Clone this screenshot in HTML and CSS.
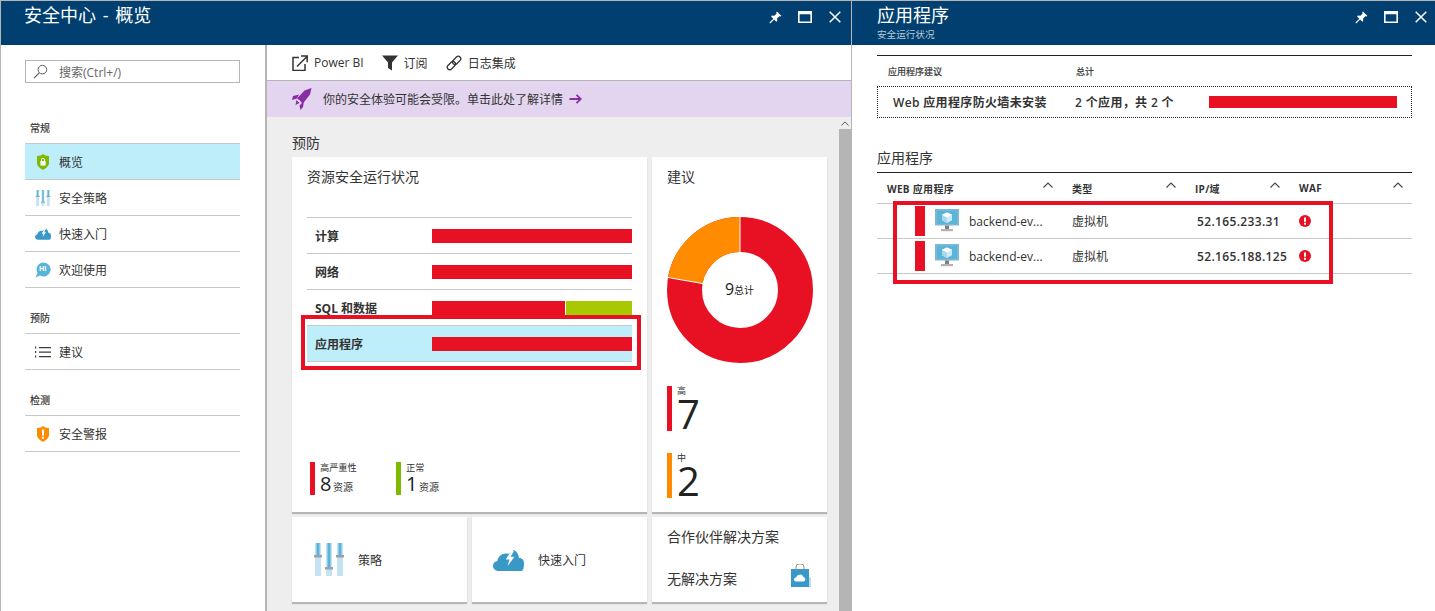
FILE: index.html
```html
<!DOCTYPE html>
<html lang="zh-CN">
    <head>
        <title>安全中心 - 概览</title>
        <meta charset="utf-8" />
        <link rel="stylesheet" href="styles.css">
    </head>
    <body>
        <svg class="defs" width="0" height="0">
            <symbol id="ic-pin" viewBox="0 0 14 14"><path d="M8.6 0.6l4.8 4.8-1.3 0.6-1-0.4-2.4 2.4 0.2 2.6-1 1-2.4-2.5-3.9 4-0.9 0 0-0.9 4-3.9-2.5-2.4 1-1 2.6 0.2 2.4-2.4-0.4-1z" fill="#fff"/></symbol>
            <symbol id="ic-max" viewBox="0 0 14 12"><path d="M0 0h14v12H0z M1.6 3.2v7.2h10.8V3.2z" fill="#fff" fill-rule="evenodd"/></symbol>
            <symbol id="ic-close" viewBox="0 0 12 12"><path d="M0.7 0.7l10.6 10.6M11.3 0.7L0.7 11.3" stroke="#fff" stroke-width="1.5" fill="none"/></symbol>
            <symbol id="ic-search" viewBox="0 0 16 16"><circle cx="10" cy="6" r="4.6" fill="none" stroke="#555" stroke-width="1"/><path d="M6.6 9.4L1 15" stroke="#555" stroke-width="1.2"/></symbol>
            <symbol id="ic-shield" viewBox="0 0 14 16"><path d="M7 0l2.2 1.6L13 2v7c0 3.200-3.400 5.400-6 7-2.600-1.600-6-3.800-6-7V2l3.800-0.400z" fill="#7fba00"/><path d="M4.400 7h5.200v4.600H4.400z" fill="#fff"/><path d="M5.500 7V5.800a1.500 1.500 0 013 0V7" fill="none" stroke="#fff" stroke-width="1"/></symbol>
            <symbol id="ic-shield-warn" viewBox="0 0 14 16"><path d="M7 0l2.200 1.600L13 2v7c0 3.200-3.400 5.400-6 7-2.600-1.600-6-3.800-6-7V2l3.800-0.400z" fill="#ff8c00"/><path d="M6 3.500h2v6H6zM6 10.700h2v2H6z" fill="#fff"/></symbol>
            <symbol id="ic-sliders" viewBox="0 0 30 33"><path d="M1 0h6v33H1zM12 0h6v33H12zM23 0h6v33H23z" fill="#c4e3f2"/><path d="M2.500 0h3v12h-3zM13.500 0h3v24h-3zM24.500 0h3v12h-3z" fill="#59b4d9"/><path d="M0 12h8v2.500H0zM11 24h8v2.500h-8zM22 12h8v2.500h-8z" fill="#a0a0a0"/></symbol>
            <symbol id="ic-cloud" viewBox="0 0 34 24"><path d="M6.500 24C2.800 24 0 21.500 0 18.500s2.200-5 4.800-5.400C5.500 8.500 9.500 5 14 5c1.800 0 3 0.300 4-0.500L23 1c3 1.500 5 4.500 5.500 8.500 3.200 0.500 5.500 2.200 5.500 6 0 1.500 0 8.500-3 8.500z" fill="#3999c6"/><path d="M20 2l-6 9.500h4l-2 7 7.500-10h-4.200L23 2z" fill="#fff"/></symbol>
            <symbol id="ic-hi" viewBox="0 0 16 16"><path d="M8.500 0.500a7 7 0 11-3.500 13L0.500 15.500l2-4.500A7 7 0 018.500 0.500z" fill="#59b4d9"/></symbol>
            <symbol id="ic-list" viewBox="0 0 16 12"><path d="M4 1h12v1.200H4zM4 5.500h12v1.200H4zM4 10h12v1.200H4z" fill="#3c3c3c"/><path d="M0 0.500h1.200v2H0zM0 5h1.200v2H0zM0 9.500h1.200v2H0z" fill="#3c3c3c"/></symbol>
            <symbol id="ic-external" viewBox="0 0 16 16"><path d="M7 2.500H1v13h12V9" fill="none" stroke="#333" stroke-width="1.500"/><path d="M5 11.500L14.500 2M9 1h6.200v6.200" fill="none" stroke="#333" stroke-width="1.500"/></symbol>
            <symbol id="ic-filter" viewBox="0 0 16 15"><path d="M0 0h16l-6 7v8l-4-2.500V7z" fill="#333"/></symbol>
            <symbol id="ic-link" viewBox="0 0 16 16"><g transform="rotate(-45 8 8)" fill="none" stroke="#333" stroke-width="1.300"><rect x="-0.500" y="5.500" width="9.500" height="5" rx="2.500"/><rect x="7" y="5.500" width="9.500" height="5" rx="2.500"/></g></symbol>
            <symbol id="ic-rocket" viewBox="0 0 20 22"><path d="M19.500 0l-1.500 6.500-7.500 9.500-2.500-3.500-3-2 7.500-8z" fill="#8a2da5"/><path d="M7 6.500L1 8l-1 4 5-1.500zM12 13l-1 6-2.500 3-1-4.500z M4.500 12l3 3-4 2z" fill="#8a2da5"/></symbol>
            <symbol id="ic-arrow" viewBox="0 0 13 10"><path d="M0.500 5h11M7.500 0.800L11.800 5 7.500 9.200" fill="none" stroke="#8a2da5" stroke-width="1.800"/></symbol>
            <symbol id="ic-monitor" viewBox="0 0 24 24"><path d="M0 0h24v16.500H0z" fill="#7fb6d2"/><path d="M2 1.800h20v13H2z" fill="#59b4d9"/><path d="M12 3.500l5 2.300v5.400L12 14l-5-2.800V5.800z" fill="#cfe9f5"/><path d="M12 8.500V14l-5-2.800V5.800z" fill="#a8d8ee"/><path d="M12 3.500l5 2.300-5 2.700-5-2.700z" fill="#fff"/><path d="M10 16.500h4v3.500h-4z" fill="#7f7f7f"/><path d="M6 20h12v2.200H6z" fill="#b3b3b3"/></symbol>
            <symbol id="ic-bag" viewBox="0 0 20 24"><path d="M0 5h18v18H0z" fill="#3999c6"/><path d="M18 13l2 1v9h-2z" fill="#b9def0"/><path d="M5 7V3a3 3 0 013-3h2a3 3 0 013 3v4" fill="none" stroke="#8c8c8c" stroke-width="1"/><path d="M5 17.500a2 2 0 010-4 4 4 0 017.500-0.500 2.300 2.300 0 010 4.500z" fill="#fff"/></symbol>
            <symbol id="ic-alert" viewBox="0 0 12 12"><circle cx="6" cy="6" r="6" fill="#e81123"/><path d="M5 2.500h2v4.300H5zM5 7.800h2v1.900H5z" fill="#fff"/></symbol>
            <symbol id="ic-caret" viewBox="0 0 10 6"><path d="M0.500 5.500L5 1l4.500 4.500" fill="none" stroke="#444" stroke-width="1.100"/></symbol>
        </svg>

        <div class="page">
            <section class="blade blade-main">
                <header class="blade-head">
                    <div class="blade-tit"><h1>安全中心 - 概览</h1></div>
                    <div class="blade-ctrl">
                        <svg class="ctrl-pin"><use href="#ic-pin"/></svg>
                        <svg class="ctrl-max"><use href="#ic-max"/></svg>
                        <svg class="ctrl-close"><use href="#ic-close"/></svg>
                    </div>
                </header>
                <div class="blade-body">
                    <nav class="side">
                        <div class="search">
                            <svg class="search-ic"><use href="#ic-search"/></svg>
                            <span>搜索(Ctrl+/)</span>
                        </div>
                        <h2 class="side-group first">常规</h2>
                        <ul class="side-list">
                            <li class="on"><svg class="side-ic"><use href="#ic-shield"/></svg>概览</li>
                            <li><svg class="side-ic"><use href="#ic-sliders"/></svg>安全策略</li>
                            <li><svg class="side-ic"><use href="#ic-cloud"/></svg>快速入门</li>
                            <li><span class="hi"><svg class="side-ic"><use href="#ic-hi"/></svg><em>Hi</em></span>欢迎使用</li>
                        </ul>
                        <h2 class="side-group">预防</h2>
                        <ul class="side-list">
                            <li><svg class="side-ic"><use href="#ic-list"/></svg>建议</li>
                        </ul>
                        <h2 class="side-group">检测</h2>
                        <ul class="side-list">
                            <li><svg class="side-ic"><use href="#ic-shield-warn"/></svg>安全警报</li>
                        </ul>
                    </nav>
                    <div class="main">
                        <div class="toolbar">
                            <span class="tool"><svg class="tool-ic"><use href="#ic-external"/></svg>Power BI</span>
                            <span class="tool"><svg class="tool-ic"><use href="#ic-filter"/></svg>订阅</span>
                            <span class="tool"><svg class="tool-ic"><use href="#ic-link"/></svg>日志集成</span>
                        </div>
                        <div class="banner">
                            <svg class="banner-ic"><use href="#ic-rocket"/></svg>
                            <span>你的安全体验可能会受限。单击此处了解详情</span>
                            <svg class="banner-arrow"><use href="#ic-arrow"/></svg>
                        </div>
                        <div class="content">
                            <div class="content-in">
                                <h2 class="sec-tit">预防</h2>
                                <div class="cards">
                                    <div class="card card-health">
                                        <h3 class="card-tit">资源安全运行状况</h3>
                                        <div class="health">
                                            <div class="health-row"><b>计算</b><div class="bar"><i class="red full"></i></div></div>
                                            <div class="health-row"><b>网络</b><div class="bar"><i class="red full"></i></div></div>
                                            <div class="health-row"><b>SQL 和数据</b><div class="bar"><i class="red two-thirds"></i><i class="lime"></i></div></div>
                                            <div class="health-row on"><b>应用程序</b><div class="bar"><i class="red full"></i></div></div>
                                        </div>
                                        <div class="legend">
                                            <div class="legend-item red-line">
                                                <small>高严重性</small>
                                                <p><strong>8</strong> 资源</p>
                                            </div>
                                            <div class="legend-item green-line">
                                                <small>正常</small>
                                                <p><strong>1</strong> 资源</p>
                                            </div>
                                        </div>
                                        <div class="mark mark-health"></div>
                                    </div>
                                    <div class="card card-rec">
                                        <h3 class="card-tit">建议</h3>
                                        <svg class="donut" viewBox="0 0 146 146">
                                            <circle cx="73" cy="73" r="55.500" fill="none" stroke="#e81123" stroke-width="35"/>
                                            <path d="M73 17.500A55.500 55.500 0 0 0 18.340 63.360" fill="none" stroke="#ff8c00" stroke-width="35"/>
                                            <path d="M73 0V36M1 60.500L37 66.800" stroke="#fff" stroke-width="1"/>
                                            <text x="58" y="78" class="donut-num">9</text>
                                            <text x="67" y="77" class="donut-lab">总计</text>
                                        </svg>
                                        <div class="stat red-line"><small>高</small><strong>7</strong></div>
                                        <div class="stat orange-line"><small>中</small><strong>2</strong></div>
                                    </div>
                                    <div class="card tile">
                                        <svg class="tile-sliders"><use href="#ic-sliders"/></svg>
                                        <span>策略</span>
                                    </div>
                                    <div class="card tile tile-quick">
                                        <svg class="tile-cloud"><use href="#ic-cloud"/></svg>
                                        <span>快速入门</span>
                                    </div>
                                    <div class="card partner">
                                        <h3 class="partner-tit">合作伙伴解决方案</h3>
                                        <div class="partner-row">
                                            <span>无解决方案</span>
                                            <svg class="partner-bag"><use href="#ic-bag"/></svg>
                                        </div>
                                    </div>
                                </div>
                            </div>
                            <div class="scroll"><div class="scroll-up"><svg class="scroll-caret"><use href="#ic-caret"/></svg></div><div class="scroll-thumb"></div></div>
                        </div>
                    </div>
                </div>
            </section>

            <section class="blade blade-app">
                <header class="blade-head">
                    <div class="blade-tit">
                        <h1>应用程序</h1>
                        <p>安全运行状况</p>
                    </div>
                    <div class="blade-ctrl">
                        <svg class="ctrl-pin"><use href="#ic-pin"/></svg>
                        <svg class="ctrl-max"><use href="#ic-max"/></svg>
                        <svg class="ctrl-close"><use href="#ic-close"/></svg>
                    </div>
                </header>
                <div class="app-body">
                    <div class="rec-tbl">
                        <div class="rec-head"><span>应用程序建议</span><span>总计</span></div>
                        <div class="rec-row">
                            <b>Web 应用程序防火墙未安装</b>
                            <b>2 个应用，共 2 个</b>
                            <i class="rec-bar"></i>
                        </div>
                    </div>
                    <h2 class="app-tit">应用程序</h2>
                    <div class="app-tbl">
                        <div class="app-row app-head">
                            <div>WEB 应用程序<svg class="sort"><use href="#ic-caret"/></svg></div>
                            <div>类型<svg class="sort"><use href="#ic-caret"/></svg></div>
                            <div>IP/域<svg class="sort"><use href="#ic-caret"/></svg></div>
                            <div>WAF<svg class="sort"><use href="#ic-caret"/></svg></div>
                        </div>
                        <div class="app-row">
                            <div class="app-name"><i class="strip"></i><svg class="vm"><use href="#ic-monitor"/></svg>backend-ev...</div>
                            <div>虚拟机</div>
                            <div class="ip">52.165.233.31</div>
                            <div><svg class="alert"><use href="#ic-alert"/></svg></div>
                        </div>
                        <div class="app-row">
                            <div class="app-name"><i class="strip"></i><svg class="vm"><use href="#ic-monitor"/></svg>backend-ev...</div>
                            <div>虚拟机</div>
                            <div class="ip">52.165.188.125</div>
                            <div><svg class="alert"><use href="#ic-alert"/></svg></div>
                        </div>
                        <div class="mark mark-app"></div>
                    </div>
                </div>
            </section>
        </div>
    </body>
</html>
```

FILE: styles.css
```css
* {
    margin: 0;
    padding: 0;
    box-sizing: border-box;
}

html,
body {
    width: 1435px;
    height: 611px;
    overflow: hidden;
    background: #fff;
    color: #333;
    font-family: "Open Sans", "Noto Sans CJK SC", sans-serif;
    font-size: 12px;
}

ul {
    list-style: none;
}

.defs {
    position: absolute;
}

.page {
    display: flex;
    height: 611px;
    border-top: 1px solid #b5b5b5;
    border-left: 1px solid #b5b5b5;
}

.blade {
    display: flex;
    flex-direction: column;
    height: 610px;
}

.blade-main {
    width: 850px;
}

.blade-app {
    width: 584px;
    border-left: 1px solid #b5b5b5;
}

.blade-head {
    display: flex;
    justify-content: space-between;
    flex: none;
    height: 44px;
    background: #003f6f;
    color: #fff;
}

.blade-tit {
    padding: 1px 0 0 23px;
}

.blade-app .blade-tit {
    padding-left: 25px;
}

.blade-tit h1 {
    font-size: 18px;
    font-weight: 400;
    line-height: 26px;
    word-spacing: 2px;
}

.blade-tit p {
    margin-top: 1px;
    font-size: 9.6px;
    line-height: 11px;
    color: #b9c9d6;
}

.blade-ctrl {
    display: flex;
    align-items: center;
    height: 32px;
    padding-right: 10px;
}

.blade-app .blade-ctrl {
    padding-right: 8px;
}

.blade-ctrl svg {
    display: block;
}

.ctrl-pin {
    width: 13px;
    height: 13px;
    margin-right: 16px;
}

.ctrl-max {
    width: 14px;
    height: 12px;
    margin-right: 17px;
}

.ctrl-close {
    width: 12px;
    height: 12px;
}

.blade-body {
    display: flex;
    flex: 1;
    min-height: 0;
}

/* left menu */
.side {
    flex: none;
    width: 266px;
    padding: 15px 25px 0 24px;
    border-right: 2px solid #b5b5b5;
}

.search {
    display: flex;
    align-items: center;
    height: 23px;
    padding-left: 7px;
    border: 1px solid #b5b5b5;
    color: #666;
}

.search-ic {
    width: 15px;
    height: 15px;
    margin-right: 11px;
}

.side-group {
    height: 28px;
    margin-top: 17px;
    padding-top: 6px;
    padding-left: 5px;
    font-size: 10px;
    font-weight: 400;
    line-height: 14px;
    -webkit-text-stroke: 0.2px #333;
}

.side-group.first {
    margin-top: 32px;
    padding-top: 6px;
}

.side-list {
    border-top: 1px solid #c8c8c8;
}

.side-list li {
    display: flex;
    align-items: center;
    height: 36px;
    padding-left: 10px;
    border-bottom: 1px solid #c8c8c8;
    color: #333;
}

.side-list li.on {
    background: #bfeefb;
}

.side-ic {
    flex: none;
    width: 16px;
    height: 16px;
    margin-right: 8px;
}

.hi {
    position: relative;
    display: flex;
}

.hi em {
    position: absolute;
    left: 4px;
    top: 2px;
    font-size: 7px;
    font-style: normal;
    font-weight: 700;
    line-height: 10px;
    color: #fff;
}

/* main column */
.main {
    display: flex;
    flex-direction: column;
    flex: 1;
    min-width: 0;
}

.toolbar {
    display: flex;
    align-items: center;
    flex: none;
    height: 36px;
    padding-left: 25px;
    border-bottom: 1px solid #b5b5b5;
}

.tool {
    display: flex;
    align-items: center;
    margin-right: 18px;
}

.tool-ic {
    width: 16px;
    height: 16px;
    margin-right: 6px;
}

.banner {
    display: flex;
    align-items: center;
    flex: none;
    height: 36px;
    padding-left: 25px;
    background: #e3d5ef;
}

.banner-ic {
    width: 20px;
    height: 22px;
    margin-right: 11px;
}

.banner-arrow {
    width: 13px;
    height: 10px;
    margin-left: 6px;
}

.content {
    display: flex;
    flex: 1;
    min-height: 0;
    background: #eee;
}

.content-in {
    flex: 1;
    padding: 0 11px 0 25px;
}

.sec-tit {
    height: 40px;
    padding-top: 16px;
    font-size: 14px;
    font-weight: 400;
    line-height: 20px;
}

.cards {
    display: grid;
    grid-template-columns: repeat(3, 175px);
    grid-template-rows: 355px 85px;
    gap: 5px;
}

.card {
    position: relative;
    background: #fff;
    box-shadow: 0 2px 1px #b5b5b5;
}

.card-tit {
    font-size: 14px;
    font-weight: 400;
    line-height: 20px;
}

.card-health {
    display: flex;
    flex-direction: column;
    grid-column: span 2;
    padding: 10px 15px 17px;
}

.health {
    margin-top: 30px;
    border-top: 1px solid #c8c8c8;
}

.health-row {
    display: flex;
    align-items: center;
    height: 36px;
    padding-left: 8px;
    border-bottom: 1px solid #c8c8c8;
}

.health-row.on {
    background: #bfeefb;
}

.health-row b {
    width: 117px;
    font-weight: 700;
}

.bar {
    display: flex;
    gap: 1px;
    width: 200px;
    height: 14px;
}

.bar i {
    display: block;
    height: 100%;
}

.red {
    background: #e81123;
}

.lime {
    background: #a8c800;
    flex: 1;
}

.full {
    width: 100%;
}

.two-thirds {
    width: 133px;
}

.legend {
    display: flex;
    margin-top: auto;
    padding-left: 3px;
}

.legend-item {
    width: 86px;
    height: 33px;
    padding-left: 5px;
}

.red-line {
    border-left: 5px solid #e81123;
}

.green-line {
    border-left: 5px solid #7fba00;
}

.orange-line {
    border-left: 5px solid #ff8c00;
}

.legend-item small {
    display: block;
    font-size: 9.2px;
    line-height: 11px;
}

.legend-item p {
    font-size: 10px;
    line-height: 22px;
}

.legend-item strong {
    margin-right: -1px;
    font-size: 20px;
    font-weight: 400;
    line-height: 22px;
    color: #222;
}

.card-rec {
    padding: 10px 15px 0;
}

.donut {
    display: block;
    width: 146px;
    height: 146px;
    margin-top: 30px;
}

.donut-num {
    font-size: 16px;
    fill: #222;
}

.donut-lab {
    font-size: 10px;
    fill: #222;
}

.stat {
    height: 45px;
    margin-top: 23px;
    padding-left: 5px;
}

.stat small {
    display: block;
    font-size: 9px;
    line-height: 10px;
}

.stat strong {
    display: block;
    font-size: 40px;
    font-weight: 400;
    line-height: 35px;
    color: #222;
}

.stat + .stat {
    margin-top: 22px;
}

.tile {
    display: flex;
    align-items: center;
    padding-left: 22px;
}

.tile span {
    color: #333;
}

.tile-sliders {
    width: 30px;
    height: 33px;
    margin-right: 14px;
}

.tile-quick {
    padding-left: 21px;
}

.tile-cloud {
    width: 31px;
    height: 22px;
    margin-right: 14px;
}

.partner {
    padding: 10px 15px 0;
}

.partner-tit {
    font-size: 14px;
    font-weight: 400;
    line-height: 20px;
}

.partner-row {
    display: flex;
    align-items: center;
    justify-content: space-between;
    margin-top: 17px;
    font-size: 14px;
    line-height: 20px;
}

.partner-bag {
    width: 20px;
    height: 24px;
    margin: 0 1px 6px 0;
}

.scroll {
    display: flex;
    flex-direction: column;
    flex: none;
    width: 12px;
}

.scroll-up {
    display: flex;
    align-items: center;
    justify-content: center;
    height: 12px;
}

.scroll-caret {
    width: 8px;
    height: 5px;
}

.scroll-thumb {
    flex: 1;
    background: #b5b5b5;
}

/* red marks over the screenshot */
.mark {
    position: absolute;
    border: 4px solid #e81123;
}

.mark-health {
    left: 9px;
    top: 158px;
    width: 340px;
    height: 55px;
}

.mark-app {
    left: 16px;
    top: 28px;
    width: 440px;
    height: 83px;
}

/* application blade */
.app-body {
    flex: 1;
    padding: 10px 23px 0 25px;
}

.rec-tbl {
    border-top: 1px solid #222;
}

.rec-head {
    display: flex;
    height: 30px;
    padding: 10px 0 0 11px;
    font-size: 9px;
    line-height: 12px;
    -webkit-text-stroke: 0.2px #333;
}

.rec-head span:first-child {
    width: 188px;
}

.rec-row {
    display: flex;
    align-items: center;
    height: 32px;
    padding-left: 15px;
    border: 1px dotted #222;
}

.rec-row b {
    font-weight: 600;
    letter-spacing: 0.35px;
}

.rec-row b:first-child {
    width: 182px;
}

.rec-row b:nth-child(2) {
    width: 134px;
}

.rec-bar {
    display: block;
    width: 188px;
    height: 12px;
    background: #e81123;
}

.app-tit {
    height: 25px;
    margin-top: 30px;
    font-size: 14px;
    font-weight: 400;
    line-height: 20px;
    border-bottom: 1px solid #222;
}

.app-tbl {
    position: relative;
}

.app-row {
    display: grid;
    grid-template-columns: 185px 123px 104px 1fr;
    align-items: center;
    height: 35px;
    border-bottom: 1px solid #c8c8c8;
}

.app-row > div {
    padding-left: 10px;
}

.app-head {
    height: 31px;
    font-size: 10px;
    font-weight: 700;
    letter-spacing: 0.3px;
}

.app-head > div {
    position: relative;
}

.sort {
    position: absolute;
    right: 9px;
    top: 1px;
    width: 10px;
    height: 6px;
}

.app-row > .app-name {
    display: flex;
    align-items: center;
    padding-left: 38px;
}

.strip {
    display: block;
    width: 10px;
    height: 30px;
    margin-right: 10px;
    background: #e81123;
}

.vm {
    width: 24px;
    height: 24px;
    margin-right: 10px;
}

.app-row > .ip {
    padding-left: 12px;
    font-weight: 600;
    letter-spacing: 0.35px;
}

.alert {
    display: block;
    width: 12px;
    height: 12px;
}
```
